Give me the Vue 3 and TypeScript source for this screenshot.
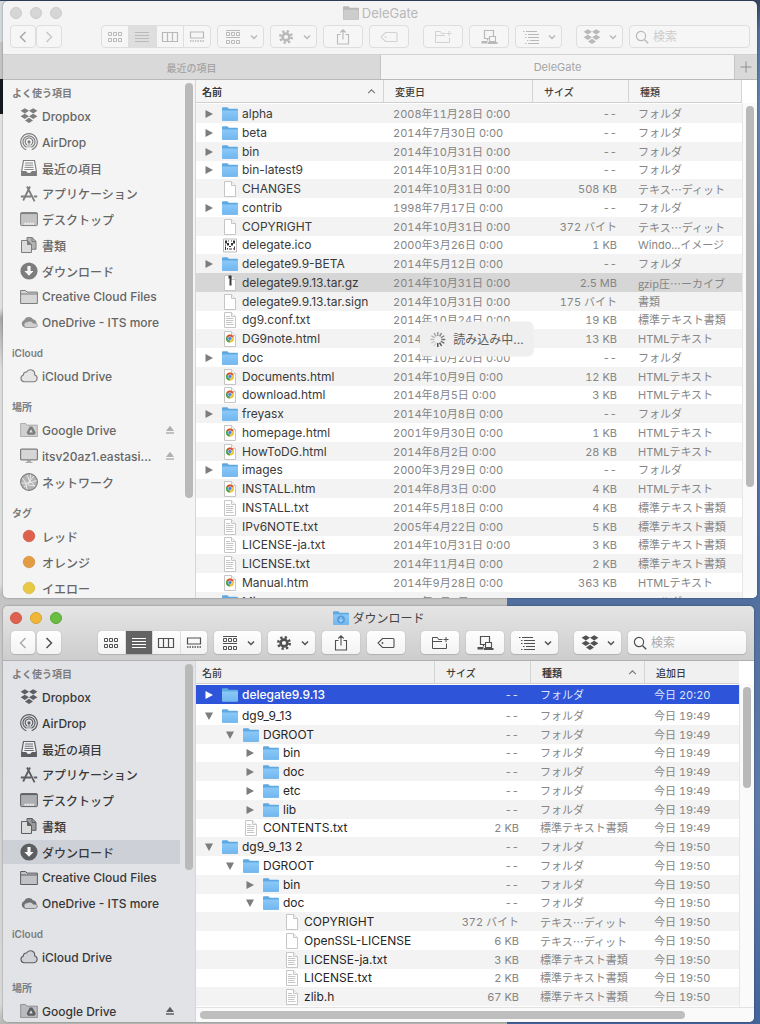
<script setup lang="ts">
type Column = { key: 'date' | 'size' | 'kind'; label: string; sorted?: boolean }
type Row = {
  name: string
  icon: string
  date: string
  size: string
  kind: string
  level?: number
  open?: boolean
  selected?: boolean
}
type Place = { label: string; icon: string; eject?: boolean; current?: boolean }
type Section = { title: string; items: Place[] }
type Finder = {
  id: string
  title: string
  titleIcon: string
  active: boolean
  tabs: string[]
  nameSorted: boolean
  columns: Column[]
  sections: Section[]
  rows: Row[]
  sideThumb: number
  listThumb: number
  wideThumb: number
  loading: boolean
}

const dir = (name: string, date: string, level = 0, open = false): Row => ({
  name, icon: 'folder', date, size: '--', kind: 'フォルダ', level, open,
})
const file = (name: string, icon: string, date: string, size: string, kind: string, level = 0): Row => ({
  name, icon, date, size, kind, level,
})
const day = (d: string) => `${d} 0:00`
const TEXT = '標準テキスト書類'
const EDIT = 'テキス…ディット'
const HTML = 'HTMLテキスト'

const sections = (current: string): Section[] => [
  {
    title: 'よく使う項目',
    items: [
      { label: 'Dropbox', icon: 'dropbox' },
      { label: 'AirDrop', icon: 'airdrop' },
      { label: '最近の項目', icon: 'recents' },
      { label: 'アプリケーション', icon: 'apps' },
      { label: 'デスクトップ', icon: 'desktop' },
      { label: '書類', icon: 'docs' },
      { label: 'ダウンロード', icon: 'download' },
      { label: 'Creative Cloud Files', icon: 'sidefolder' },
      { label: 'OneDrive - ITS more', icon: 'onedrive' },
    ].map((p) => ({ ...p, current: p.label === current })),
  },
  { title: 'iCloud', items: [{ label: 'iCloud Drive', icon: 'icloud' }] },
  {
    title: '場所',
    items: [
      { label: 'Google Drive', icon: 'gdrive', eject: true },
      { label: 'itsv20az1.eastasi...', icon: 'display', eject: true },
      { label: 'ネットワーク', icon: 'network' },
    ],
  },
  {
    title: 'タグ',
    items: [
      { label: 'レッド', icon: 'tag-red' },
      { label: 'オレンジ', icon: 'tag-orange' },
      { label: 'イエロー', icon: 'tag-yellow' },
    ],
  },
]

const windows: Finder[] = [
  {
    id: 'delegate',
    title: 'DeleGate',
    titleIcon: 'folder-gray',
    active: false,
    tabs: ['最近の項目', 'DeleGate'],
    nameSorted: true,
    columns: [
      { key: 'date', label: '変更日' },
      { key: 'size', label: 'サイズ' },
      { key: 'kind', label: '種類' },
    ],
    sections: sections(''),
    rows: [
      dir('alpha', day('2008年11月28日')),
      dir('beta', day('2014年7月30日')),
      dir('bin', day('2014年10月31日')),
      dir('bin-latest9', day('2014年10月31日')),
      file('CHANGES', 'blank', day('2014年10月31日'), '508 KB', EDIT),
      dir('contrib', day('1998年7月17日')),
      file('COPYRIGHT', 'blank', day('2014年10月31日'), '372 バイト', EDIT),
      file('delegate.ico', 'ico', day('2000年3月26日'), '1 KB', 'Windo...イメージ'),
      dir('delegate9.9-BETA', day('2014年5月12日')),
      { ...file('delegate9.9.13.tar.gz', 'archive', day('2014年10月31日'), '2.5 MB', 'gzip圧…ーカイブ'), selected: true },
      file('delegate9.9.13.tar.sign', 'blank', day('2014年10月31日'), '175 バイト', '書類'),
      file('dg9.conf.txt', 'text', day('2014年10月24日'), '19 KB', TEXT),
      file('DG9note.html', 'html', day('2014年10月24日'), '13 KB', HTML),
      dir('doc', day('2014年10月20日')),
      file('Documents.html', 'html', day('2014年10月9日'), '12 KB', HTML),
      file('download.html', 'html', day('2014年8月5日'), '3 KB', HTML),
      dir('freyasx', day('2014年10月8日')),
      file('homepage.html', 'html', day('2001年9月30日'), '1 KB', HTML),
      file('HowToDG.html', 'html', day('2014年8月2日'), '28 KB', HTML),
      dir('images', day('2000年3月29日')),
      file('INSTALL.htm', 'html', day('2014年8月3日'), '4 KB', HTML),
      file('INSTALL.txt', 'text', day('2014年5月18日'), '4 KB', TEXT),
      file('IPv6NOTE.txt', 'text', day('2005年4月22日'), '5 KB', TEXT),
      file('LICENSE-ja.txt', 'text', day('2014年10月31日'), '3 KB', TEXT),
      file('LICENSE.txt', 'text', day('2014年11月4日'), '2 KB', TEXT),
      file('Manual.htm', 'html', day('2014年9月28日'), '363 KB', HTML),
      dir('Misc', day('2014年9月8日')),
    ],
    sideThumb: 81,
    listThumb: 78,
    wideThumb: 0,
    loading: true,
  },
  {
    id: 'downloads',
    title: 'ダウンロード',
    titleIcon: 'folder-down',
    active: true,
    tabs: [],
    nameSorted: false,
    columns: [
      { key: 'size', label: 'サイズ' },
      { key: 'kind', label: '種類', sorted: true },
      { key: 'date', label: '追加日' },
    ],
    sections: sections('ダウンロード').slice(0, 3),
    rows: [
      { ...dir('delegate9.9.13', '今日 20:20'), selected: true },
      dir('dg9_9_13', '今日 19:49', 0, true),
      dir('DGROOT', '今日 19:49', 1, true),
      dir('bin', '今日 19:49', 2),
      dir('doc', '今日 19:49', 2),
      dir('etc', '今日 19:49', 2),
      dir('lib', '今日 19:49', 2),
      file('CONTENTS.txt', 'text', '今日 19:49', '2 KB', TEXT, 1),
      dir('dg9_9_13 2', '今日 19:50', 0, true),
      dir('DGROOT', '今日 19:50', 1, true),
      dir('bin', '今日 19:50', 2),
      dir('doc', '今日 19:50', 2, true),
      file('COPYRIGHT', 'blank', '今日 19:50', '372 バイト', EDIT, 3),
      file('OpenSSL-LICENSE', 'blank', '今日 19:50', '6 KB', EDIT, 3),
      file('LICENSE-ja.txt', 'text', '今日 19:50', '3 KB', TEXT, 3),
      file('LICENSE.txt', 'text', '今日 19:50', '2 KB', TEXT, 3),
      file('zlib.h', 'text', '今日 19:50', '67 KB', TEXT, 3),
    ],
    sideThumb: 58,
    listThumb: 32,
    wideThumb: 90,
    loading: false,
  },
]

const views = [
  { icon: 'view-icons', label: 'アイコン' },
  { icon: 'view-list', label: 'リスト' },
  { icon: 'view-columns', label: 'カラム' },
  { icon: 'view-gallery', label: 'ギャラリー' },
]
const tools = [
  { icon: 'group', label: 'グループ', menu: true },
  { icon: 'gear', label: 'アクション', menu: true },
  { icon: 'share', label: '共有', menu: false },
  { icon: 'label', label: 'タグを編集', menu: false },
  { icon: 'new-folder', label: '新規フォルダ', menu: false, apart: true },
  { icon: 'connect', label: '接続', menu: false },
  { icon: 'outline', label: '項目の並び', menu: true },
  { icon: 'dropbox', label: 'Dropbox メニュー', menu: true, apart: true },
]
const spokes = Array.from({ length: 12 }, (_, i) => i)
</script>

<template>
  <svg class="sprite" aria-hidden="true">
    <defs>
      <linearGradient id="blue" x1="0" y1="0" x2="0" y2="1">
        <stop offset="0" stop-color="#8ac8f7" /><stop offset="1" stop-color="#72b7f0" />
      </linearGradient>
      <symbol id="folder" viewBox="0 0 18 18">
        <path d="M1 15V3.200q0-1 1-1h4.400l1.500 1.600H16q1 0 1 1V15q0 .8-.8.8H1.800Q1 15.800 1 15z" fill="#5fa9e2" />
        <path d="M1 5.600h16V14.700q0 .8-.8.8H1.800q-.8 0-.8-.8z" fill="url(#blue)" />
      </symbol>
      <symbol id="folder-gray" viewBox="0 0 18 18">
        <path d="M1 15V3.200q0-1 1-1h4.400l1.500 1.600H16q1 0 1 1V15q0 .8-.8.8H1.800Q1 15.800 1 15z" fill="#b9b9b9" />
        <path d="M1.500 5.800h15V15h-15z" fill="#cdcdcd" />
      </symbol>
      <symbol id="folder-down" viewBox="0 0 18 18">
        <use href="#folder" />
        <circle cx="9" cy="10.500" r="4" fill="#5a9fdc" />
        <path d="M9 8.200v4M7.200 10.700 9 12.500l1.800-1.800" fill="none" stroke="#a6d6fb" stroke-width="1.200" />
      </symbol>
      <symbol id="blank" viewBox="0 0 18 18">
        <path d="M3.500 1.500h7l4 4v11h-11z" fill="#fff" stroke="#c6c6c6" />
        <path d="M10.500 1.500v4h4" fill="#f2f2f2" stroke="#c6c6c6" />
      </symbol>
      <symbol id="text" viewBox="0 0 18 18">
        <use href="#blank" />
        <path d="M5 5.500h4M5 7.500h7.500M5 9.500h7.500M5 11.500h6.500M5 13.500h7.500" stroke="#c0c0c0" stroke-width=".9" />
      </symbol>
      <symbol id="html" viewBox="0 0 18 18">
        <use href="#blank" />
        <circle cx="9" cy="8.500" r="4" fill="#f3c431" />
        <path d="M9 8.500 5.500 6.500A4 4 0 0 1 12.500 6.500z" fill="#d94b3c" />
        <path d="M9 8.500 5.500 6.500a4 4 0 0 0 3.300 6z" fill="#3d9f56" />
        <circle cx="9" cy="8.500" r="1.900" fill="#4880e0" stroke="#fff" stroke-width=".5" />
      </symbol>
      <symbol id="archive" viewBox="0 0 18 18">
        <use href="#blank" />
        <path d="M7.500 1.500h3v10h-2v-7h-1z" fill="#3b3b3b" />
      </symbol>
      <symbol id="ico" viewBox="0 0 18 18">
        <path d="M2.500 3h13v13h-13z" fill="#fff" stroke="#bbb" />
        <path d="M4 4.500h2v3H4zM7 4.500h1v1H7zM10 4.500h1v1h-1zM12 4.500h2v3h-2zM6 7h2v2.500H6zM10 7h2v2.500h-2zM8 10h2v1H8zM6 12h1v1.500H6zM8 12.500h3v1H8zM4 10.500h1V14H4zM13 10.500h1V14h-1z" fill="#333" />
        <path d="M4 8.500h1v1.500H4z" fill="#5470d0" /><path d="M12 12h1.500v1.500H12z" fill="#d66" />
      </symbol>

      <symbol id="dropbox" viewBox="0 0 18 18">
        <path d="M4.800 1.200 9 3.800 4.800 6.400.600 3.800zM13.200 1.200l4.200 2.600-4.200 2.600L9 3.800zM4.800 6.700 9 9.300l-4.200 2.600-4.200-2.600zM13.200 6.700l4.200 2.600-4.200 2.600L9 9.300zM9 10.800l4 2.600L9 16l-4-2.600z" fill="currentColor" />
      </symbol>
      <symbol id="airdrop" viewBox="0 0 18 18">
        <g fill="none" stroke="currentColor" stroke-width="1.200">
          <path d="M6.300 16.800a8.300 8.300 0 1 1 5.400 0M6.600 14.300a6 6 0 1 1 4.800 0M7 11.900a3.800 3.800 0 1 1 4 0" />
        </g>
        <path d="M9 8.500 11.600 14.500H6.400z" fill="currentColor" opacity=".4" />
        <circle cx="9" cy="8.800" r="1.600" fill="currentColor" />
      </symbol>
      <symbol id="recents" viewBox="0 0 18 18">
        <path d="M3.500 1.500h11l1.800 10.500v4.500H1.700V12z" fill="#fff" fill-opacity=".5" stroke="currentColor" stroke-width="1.200" />
        <path d="M5 4h8M4.800 6.200h8.400M4.500 8.400h9M4.300 10.500h9.400" stroke="currentColor" stroke-width=".9" />
        <path d="M1.700 12h4.500q.5 2 2.800 2t2.800-2h4.500v4.500H1.700z" fill="currentColor" />
      </symbol>
      <symbol id="apps" viewBox="0 0 18 18">
        <path d="M10 1.500 3.200 15.500M7 1.500l7.600 14.800" fill="none" stroke="currentColor" stroke-width="1.800" />
        <path d="M.800 10.400h10.400v2.200H.800zM13.400 10.400h3.800v2.200h-2.700z" fill="currentColor" />
      </symbol>
      <symbol id="desktop" viewBox="0 0 18 18">
        <rect x=".6" y="2.600" width="16.800" height="13" rx="1" fill="currentColor" fill-opacity=".4" stroke="currentColor" />
        <path d="M.600 3.600h16.800" stroke="currentColor" />
        <path d="M4.500 13.800h9.500" stroke="#eee" stroke-width="2" stroke-dasharray="2 .6" />
      </symbol>
      <symbol id="docs" viewBox="0 0 18 18">
        <path d="M7 1.500h5l4 3.800v8H7z" fill="currentColor" fill-opacity=".55" stroke="currentColor" />
        <path d="M12 1.500v4h4" fill="none" stroke="currentColor" />
        <path d="M1.500 4.500h6l4 4v8h-10z" fill="#dcdcdc" stroke="currentColor" />
        <path d="M7.500 4.500v4h4z" fill="currentColor" stroke="currentColor" />
      </symbol>
      <symbol id="download" viewBox="0 0 18 18">
        <circle cx="9" cy="9" r="8.600" fill="currentColor" />
        <path d="M7.400 4h3.200v5h3L9 13.800 4.400 9h3z" fill="#f6f6f6" />
      </symbol>
      <symbol id="sidefolder" viewBox="0 0 18 18">
        <path d="M.600 15.500v-13h5l1.400 1.600h10.400v11.400z" fill="currentColor" fill-opacity=".25" stroke="currentColor" />
        <path d="M.600 6h16.800" stroke="currentColor" />
      </symbol>
      <symbol id="onedrive" viewBox="0 0 18 18">
        <path d="M4.500 14.500a4 4 0 0 1-.3-7.500A5 5 0 0 1 13 6.300a4.200 4.200 0 0 1 .5 8.200z" fill="currentColor" fill-opacity=".85" />
        <path d="M5.500 14.500a3 3 0 0 1 0-5.300l4-1.200q3 0 3.800 2.200 3.600-.7 4.100 1.800 0 2.500-3 2.500z" fill="#d0d0d0" stroke="currentColor" stroke-width=".6" />
      </symbol>
      <symbol id="icloud" viewBox="0 0 18 18">
        <path d="M4 14.800a3.500 3.500 0 0 1-.6-6.800 2.800 2.800 0 0 1 3.200-3 4.300 4.300 0 0 1 8 2.800 3.600 3.600 0 0 1-.6 7z" fill="currentColor" fill-opacity=".12" stroke="currentColor" stroke-width="1.100" />
      </symbol>
      <symbol id="gdrive" viewBox="0 0 18 18">
        <path d="M.600 15.500v-13h5l1.400 1.600h10.400v11.400z" fill="currentColor" fill-opacity=".3" stroke="currentColor" stroke-opacity=".5" />
        <path d="M9.700 5.500h2.600l3.500 6-1.300 2.200H8l-1.300-2.200z" fill="currentColor" />
        <path d="M11 8.300 12.800 11.500H9.200z" fill="#ddd" />
      </symbol>
      <symbol id="display" viewBox="0 0 18 18">
        <rect x=".6" y="2.100" width="16.800" height="10.800" rx="1" fill="currentColor" fill-opacity=".25" stroke="currentColor" stroke-width="1.200" />
        <path d="M7 13.500h4v1.500h1.500v1h-7v-1H7z" fill="currentColor" fill-opacity=".6" />
      </symbol>
      <symbol id="network" viewBox="0 0 18 18">
        <circle cx="9" cy="9" r="8.400" fill="currentColor" fill-opacity=".55" stroke="currentColor" stroke-width="1.100" />
        <path d="M2 5q4 3 5 11.500M4 14q7-4 6.500-12.500M1.500 10q7 1.500 15-2.500M7 2q1 6 8 11M9 9l5-6M8 12l7 1" fill="none" stroke="#f0f0f0" stroke-width=".9" />
      </symbol>
      <symbol id="tag-red" viewBox="0 0 18 18"><circle cx="9" cy="9" r="5.800" fill="#dd614d" stroke="#c9503e" stroke-width=".6" /></symbol>
      <symbol id="tag-orange" viewBox="0 0 18 18"><circle cx="9" cy="9" r="5.800" fill="#e39c42" stroke="#cf8a35" stroke-width=".6" /></symbol>
      <symbol id="tag-yellow" viewBox="0 0 18 18"><circle cx="9" cy="9" r="5.800" fill="#e8c944" stroke="#d2b338" stroke-width=".6" /></symbol>
      <symbol id="eject" viewBox="0 0 10 10"><path d="M5 .8 9 6H1zM1 7.300h8v1.500H1z" fill="currentColor" /></symbol>

      <symbol id="view-icons" viewBox="0 0 18 18">
        <path d="M2.500 4.500h3v3h-3zM7.500 4.500h3v3h-3zM12.500 4.500h3v3h-3zM2.500 10.500h3v3h-3zM7.500 10.500h3v3h-3zM12.500 10.500h3v3h-3z" fill="none" stroke="currentColor" />
      </symbol>
      <symbol id="view-list" viewBox="0 0 18 18">
        <path d="M2 4.500h14M2 7.500h14M2 10.500h14M2 13.500h14" stroke="currentColor" stroke-width="1.200" />
      </symbol>
      <symbol id="view-columns" viewBox="0 0 18 18">
        <path d="M1.500 4.500h15v9h-15zM6.500 4.500v9M11.500 4.500v9" fill="none" stroke="currentColor" stroke-width="1.200" />
      </symbol>
      <symbol id="view-gallery" viewBox="0 0 18 18">
        <path d="M2.500 4h13v6h-13z" fill="none" stroke="currentColor" stroke-width="1.200" />
        <path d="M2 13h14" stroke="currentColor" stroke-width="1.700" stroke-dasharray="1.500 1" />
      </symbol>
      <symbol id="group" viewBox="0 0 18 18">
        <path d="M2 2.500h14M2 9.500h14" stroke="currentColor" />
        <path d="M2.500 4.500h3v3h-3zM7.500 4.500h3v3h-3zM12.500 4.500h3v3h-3zM2.500 12.500h3v3h-3zM7.500 12.500h3v3h-3zM12.500 12.500h3v3h-3z" fill="none" stroke="currentColor" />
      </symbol>
      <symbol id="gear" viewBox="0 0 18 18">
        <circle cx="9" cy="9" r="5.700" fill="none" stroke="currentColor" stroke-width="2.600" stroke-dasharray="2.250 2.230" />
        <circle cx="9" cy="9" r="3.400" fill="none" stroke="currentColor" stroke-width="2.600" />
      </symbol>
      <symbol id="share" viewBox="0 0 18 18">
        <path d="M6.500 6.500h-3v9.500h11V6.500h-3M9 11.500V1.800M6.300 4.500 9 1.800l2.700 2.700" fill="none" stroke="currentColor" stroke-width="1.100" />
      </symbol>
      <symbol id="label" viewBox="0 0 18 18">
        <path d="M5.500 4.500H16q1 0 1 1v7q0 1-1 1H5.500L1 9z" fill="none" stroke="currentColor" stroke-width="1.100" />
        <circle cx="5.500" cy="9" r=".9" fill="currentColor" />
      </symbol>
      <symbol id="new-folder" viewBox="0 0 18 18">
        <path d="M11.500 5.500H7.500L6.500 3.500H1.500v11h14V9.500M1.500 7.500H11M15 3v5M12.500 5.500h5" fill="none" stroke="currentColor" />
      </symbol>
      <symbol id="connect" viewBox="0 0 18 18">
        <path d="M10 10.500H4.500v-8h9v6M7.500 10.500v2" fill="none" stroke="currentColor" stroke-width="1.200" />
        <path d="M9.500 8.500h6v5h-6z" fill="none" stroke="currentColor" stroke-width="1.100" />
        <path d="M8 14h9.500v2H8zM1.500 13h6v2.500h-6z" fill="currentColor" />
      </symbol>
      <symbol id="outline" viewBox="0 0 18 18">
        <path d="M4 3.500h11M6 6.500h11M6 9.500h11M8 12.500h9M6 15.500h11" stroke="currentColor" />
        <path d="M1 3.500h1.500M3 6.500h1.500M3 9.500h1.500M5 12.500h1.500M3 15.500h1.500" stroke="currentColor" />
      </symbol>
      <symbol id="chevron" viewBox="0 0 8 8"><path d="m1 2.500 3 3 3-3" fill="none" stroke="currentColor" stroke-width="1.500" /></symbol>
      <symbol id="sort" viewBox="0 0 8 8"><path d="m1 5.500 3-3 3 3" fill="none" stroke="currentColor" /></symbol>
      <symbol id="back" viewBox="0 0 12 16"><path d="M8.500 3 3.500 8l5 5" fill="none" stroke="currentColor" stroke-width="1.500" /></symbol>
      <symbol id="forward" viewBox="0 0 12 16"><path d="m3.500 3 5 5-5 5" fill="none" stroke="currentColor" stroke-width="1.500" /></symbol>
      <symbol id="magnifier" viewBox="0 0 14 14">
        <circle cx="6" cy="6" r="4.600" fill="none" stroke="currentColor" stroke-width="1.200" />
        <path d="m9.400 9.400 3.800 3.800" stroke="currentColor" stroke-width="1.400" />
      </symbol>
      <symbol id="closed" viewBox="0 0 10 10"><path d="M1.500 1v8L9 5z" fill="currentColor" /></symbol>
      <symbol id="opened" viewBox="0 0 10 10"><path d="M1 1.500h8L5 9z" fill="currentColor" /></symbol>
    </defs>
  </svg>

  <main class="desk">
    <div class="behind" aria-hidden="true"></div>
    <section
      v-for="w in windows"
      :key="w.id"
      class="window"
      :class="[w.active ? 'active' : 'inactive', w.id]"
      :aria-label="w.title"
    >
      <header class="bar">
        <div class="titlerow">
          <div class="lights">
            <button class="light close" aria-label="閉じる"></button>
            <button class="light mini" aria-label="しまう"></button>
            <button class="light zoom" aria-label="拡大"></button>
          </div>
          <h1 class="title">
            <svg class="ic"><use :href="'#' + w.titleIcon" /></svg>{{ w.title }}
          </h1>
        </div>
        <div class="toolbar">
          <div class="nav">
            <button class="btn back" aria-label="戻る"><svg class="arrow"><use href="#back" /></svg></button>
            <button class="btn forward" aria-label="進む"><svg class="arrow"><use href="#forward" /></svg></button>
          </div>
          <div class="views">
            <button
              v-for="v in views"
              :key="v.icon"
              class="view"
              :class="{ on: v.icon === 'view-list' }"
              :aria-label="v.label"
            >
              <svg class="ic"><use :href="'#' + v.icon" /></svg>
            </button>
          </div>
          <button
            v-for="t in tools"
            :key="t.icon"
            class="btn tool"
            :class="{ menu: t.menu, apart: t.apart, faint: t.icon === 'label' || t.icon === 'new-folder' }"
            :aria-label="t.label"
          >
            <svg class="ic"><use :href="'#' + t.icon" /></svg>
            <svg v-if="t.menu" class="chev"><use href="#chevron" /></svg>
          </button>
          <label class="search">
            <svg class="glass"><use href="#magnifier" /></svg>
            <input type="search" placeholder="検索" aria-label="検索" />
          </label>
        </div>
      </header>

      <nav v-if="w.tabs.length" class="tabs">
        <button v-for="t in w.tabs" :key="t" class="tab" :class="{ front: t === w.title }">{{ t }}</button>
        <button class="addtab" aria-label="新規タブ">
          <svg class="plus" viewBox="0 0 12 12"><path d="M6 .5v11M.5 6h11" stroke="currentColor" /></svg>
        </button>
      </nav>

      <div class="content">
        <aside class="sidebar">
          <div class="places">
            <div v-for="s in w.sections" :key="s.title" class="section">
              <h2>{{ s.title }}</h2>
              <ul>
                <li v-for="p in s.items" :key="p.label">
                  <a href="#" class="place" :class="{ current: p.current }">
                    <svg class="ic"><use :href="'#' + p.icon" /></svg>
                    <span>{{ p.label }}</span>
                    <svg v-if="p.eject" class="eject"><use href="#eject" /></svg>
                  </a>
                </li>
              </ul>
            </div>
          </div>
          <div class="track"><div class="thumb" :style="{ height: w.sideThumb + '%' }"></div></div>
        </aside>

        <div class="pane">
          <div class="listing">
            <table>
              <colgroup>
                <col />
                <col v-for="c in w.columns" :key="c.key" :class="'col-' + c.key" />
              </colgroup>
              <thead>
                <tr>
                  <th :class="{ sorted: w.nameSorted }">
                    <button>名前<svg v-if="w.nameSorted" class="sort"><use href="#sort" /></svg></button>
                  </th>
                  <th v-for="c in w.columns" :key="c.key" :class="{ sorted: c.sorted }">
                    <button>{{ c.label }}<svg v-if="c.sorted" class="sort"><use href="#sort" /></svg></button>
                  </th>
                </tr>
              </thead>
              <tbody>
                <tr v-for="(r, i) in w.rows" :key="i" :class="{ selected: r.selected }">
                  <td>
                    <div class="name" :class="'level' + (r.level ?? 0)">
                      <span class="twist">
                        <button v-if="r.icon === 'folder'" :aria-label="r.name + 'を開閉'" :aria-expanded="r.open">
                          <svg><use :href="r.open ? '#opened' : '#closed'" /></svg>
                        </button>
                      </span>
                      <svg class="ic"><use :href="'#' + r.icon" /></svg>
                      <span>{{ r.name }}</span>
                    </div>
                  </td>
                  <td
                    v-for="c in w.columns"
                    :key="c.key"
                    :class="[c.key, { wide: c.key === 'kind' && r.kind.includes('…') }]"
                  >{{ r[c.key] }}</td>
                </tr>
              </tbody>
            </table>
            <div class="gutter">
              <div class="corner"></div>
              <div class="track"><div class="thumb" :style="{ height: w.listThumb + '%' }"></div></div>
            </div>
          </div>
          <div v-if="w.wideThumb" class="hscroll">
            <div class="hthumb" :style="{ width: w.wideThumb + '%' }"></div>
          </div>
          <div v-if="w.loading" class="loading" role="status">
            <svg viewBox="0 0 18 18">
              <path
                v-for="s in spokes"
                :key="s"
                d="M9 1.500v4"
                stroke="#444"
                stroke-width="1.400"
                :opacity="0.15 + 0.85 * (((17 - s) % 12) / 11)"
                :transform="`rotate(${360 - s * 30} 9 9)`"
              />
            </svg>
            読み込み中...
          </div>
        </div>
      </div>
    </section>
  </main>
</template>

<style>
body {
  margin: 0;
}
</style>

<style scoped>
* {
  box-sizing: border-box;
}
.sprite {
  position: absolute;
  width: 0;
  height: 0;
}
button {
  margin: 0;
  padding: 0;
  border: 0;
  background: none;
  font: inherit;
  color: inherit;
}
h1,
h2,
ul {
  margin: 0;
  padding: 0;
  list-style: none;
}
.desk {
  position: relative;
  display: flex;
  flex-direction: column;
  gap: 8px;
  height: 100vh;
  min-width: 720px;
  padding: 1px 0 2px 3px;
  overflow: hidden;
  background: linear-gradient(#33435f, #4f6f9f 3%, #6284b4 10%, #4a70a8 55%, #54709c 60%, #5f7ba8 80%, #43639a);
  font-family: Inter, "Noto Sans CJK JP", sans-serif;
  font-size: 12px;
}
.behind {
  position: absolute;
  left: 0;
  top: 1px;
  bottom: 0;
  width: 507px;
  background: linear-gradient(#d3d8db 0 4%, #c4c4c4 4% 7.600%, #15181d 7.600% 11%, #e2e2e2 11% 30%, #a8a8a8 31%, #dedede 36% 57%, #c3c3c3 58%, #c9c9c9 62%, #dadada 98%, #b5b8b4);
}
.ic {
  flex: none;
  width: 18px;
  height: 18px;
}
.window {
  position: relative;
  display: flex;
  flex-direction: column;
  min-height: 0;
  overflow: hidden;
  border-radius: 5px;
  box-shadow: 0 0 2px rgba(0, 0, 0, 0.45);
}
.delegate {
  flex: 597 1 0;
  margin-right: 3px;
}
.downloads {
  flex: 416 1 0;
  margin-right: 6px;
}
.inactive {
  --gap: 6px;
  --w-menu: 47px;
  --w-tool: 40px;
  --apart: 8px;
  --ink: #b9b9b9;
  --side-bg: #f4f4f4;
  --side-ink: #666;
  --side-icon: #7d7d7d;
  --eject: #b0b0b0;
  --name: #3a3a3a;
  background: #f4f4f4;
}
.active {
  --gap: 7px;
  --w-menu: 47px;
  --w-tool: 38px;
  --apart: 9px;
  --ink: #505050;
  --side-bg: #e2e3e7;
  --side-ink: #383838;
  --side-icon: #5c5e61;
  --eject: #606060;
  --name: #262626;
  background: #fff;
}
.bar {
  flex: none;
  height: 53px;
  color: var(--ink);
}
.active .bar {
  height: 55px;
  border-bottom: 1px solid #b0b0b0;
  background: linear-gradient(#e5e5e5, #cdcdcd);
}
.titlerow {
  display: grid;
  grid-template-columns: 1fr auto 1fr;
  align-items: center;
  height: 23px;
  padding: 0 7px;
}
.lights {
  display: flex;
  gap: 8px;
}
.light {
  width: 12px;
  height: 12px;
  border: 1px solid #cbcbcb;
  border-radius: 50%;
  background: #d6d6d6;
}
.active .close {
  border-color: #cf5848;
  background: #df6251;
}
.active .mini {
  border-color: #d9a22b;
  background: #efb63a;
}
.active .zoom {
  border-color: #5aa635;
  background: #6bbf40;
}
.title {
  display: flex;
  align-items: center;
  gap: 2px;
  font-size: 13px;
  font-weight: 400;
}
.active .title {
  color: #444;
  font-size: 12px;
}
.toolbar {
  display: flex;
  gap: var(--gap);
  height: 23px;
  margin-top: 1px;
  padding: 0 7px;
}
.active .toolbar {
  margin-top: 2px;
  padding: 0 8px;
}
.nav {
  display: flex;
}
.active .nav {
  gap: 2px;
}
.btn,
.views,
.search {
  display: flex;
  align-items: center;
  justify-content: center;
  border-radius: 4px;
  background: #fafafa;
}
.inactive .btn,
.inactive .views,
.inactive .search {
  border: 1px solid #dedede;
  background: #f6f6f6;
}
.active .btn,
.active .views,
.active .search {
  background: linear-gradient(#fefefe, #f3f3f3);
  box-shadow: 0 0 1px rgba(0, 0, 0, 0.3), 0 1px 1px rgba(0, 0, 0, 0.12);
}
.back,
.forward {
  width: 26px;
}
.active .back,
.active .forward {
  width: 24px;
}
.arrow {
  width: 12px;
  height: 16px;
}
.active .back {
  color: #ababab;
}
.inactive .back {
  color: #a8a8a8;
}
.inactive .forward {
  color: #c8c8c8;
}
.views {
  width: 110px;
  margin-left: 33px;
  overflow: hidden;
}
.active .views {
  width: 109px;
  margin-left: 30px;
}
.view {
  display: flex;
  flex: 1;
  align-items: center;
  justify-content: center;
  height: 100%;
}
.view + .view {
  border-left: 1px solid #dedede;
}
.inactive .on {
  background: #dedede;
}
.active .on {
  background: #636363;
  color: #fff;
}
.tool {
  flex: none;
  width: var(--w-tool);
}
.menu {
  gap: 8px;
  width: var(--w-menu);
}
.apart {
  margin-left: var(--apart);
}
.inactive .faint {
  color: #d2d2d2;
}
.chev {
  width: 8px;
  height: 8px;
}
.search {
  flex: 1;
  justify-content: flex-start;
  gap: 4px;
  min-width: 60px;
  padding: 0 5px;
}
.glass {
  flex: none;
  width: 14px;
  height: 14px;
}
.search input {
  flex: 1;
  width: 0;
  min-width: 0;
  padding: 0;
  border: 0;
  outline: 0;
  background: none;
  font: inherit;
  color: #333;
}
.search input::placeholder {
  color: #adadad;
  opacity: 1;
}
.inactive .search input::placeholder {
  color: #cdcdcd;
}
.tabs {
  display: flex;
  flex: none;
  height: 26px;
  border-top: 1px solid #d2d2d2;
  border-bottom: 1px solid #b9b9b9;
  background: #d9d9d9;
  color: #a5a5a5;
  font-size: 10px;
  font-weight: 500;
}
.tab {
  flex: 0 1 50%;
}
.front {
  flex-basis: calc(50% - 22px);
  border-left: 1px solid #c4c4c4;
  border-right: 1px solid #c4c4c4;
  background: #f4f4f4;
  font-size: 11px;
  font-weight: 400;
}
.addtab {
  display: flex;
  flex: 1;
  align-items: center;
  justify-content: center;
  color: #909090;
}
.plus {
  width: 12px;
  height: 12px;
}
.content {
  display: flex;
  flex: 1;
  min-height: 0;
}
.sidebar {
  display: flex;
  flex: none;
  width: 193px;
  border-right: 1px solid #d6d6d6;
  background: var(--side-bg);
}
.places {
  flex: 1;
  padding-top: 3px;
  overflow: hidden;
}
.section + .section {
  margin-top: 8px;
}
h2 {
  height: 20px;
  padding-left: 9px;
  color: #7c7c7c;
  font-size: 10px;
  font-weight: 600;
  line-height: 20px;
}
li {
  display: flex;
  align-items: center;
  height: 26px;
}
li:nth-child(4n) {
  height: 25px;
}
.place {
  display: flex;
  flex: 1;
  align-items: center;
  gap: 4px;
  width: 178px;
  height: 24px;
  padding: 0 7px 0 17px;
  color: var(--side-ink);
  font-weight: 500;
  text-decoration: none;
  white-space: nowrap;
}
.place .ic {
  color: var(--side-icon);
}
.current {
  margin-right: 2px;
  background: #cdd0d6;
}
.eject {
  width: 10px;
  height: 10px;
  margin-left: auto;
  color: var(--eject);
}
.track {
  flex: none;
  width: 13px;
  padding: 3px 2px 3px 3px;
}
.thumb {
  width: 8px;
  border-radius: 4px;
  background: #b9b9b9;
}
.pane {
  position: relative;
  display: flex;
  flex: 1;
  flex-direction: column;
  min-width: 0;
}
.listing {
  display: flex;
  flex: 1;
  align-items: flex-start;
  min-height: 0;
  overflow: hidden;
  background: #fff;
}
table {
  flex: 1;
  width: 0;
  table-layout: fixed;
  border-collapse: separate;
  border-spacing: 0;
}
.inactive .col-date {
  width: 149px;
}
.col-size {
  width: 96px;
}
.inactive .col-kind {
  width: 113px;
}
.active .col-kind {
  width: 114px;
}
.active .col-date {
  width: 94px;
}
th {
  height: 23px;
  padding: 0;
  border-right: 1px solid #d4d4d4;
  border-bottom: 1px solid #d0d0d0;
  background: #f5f5f5;
  color: #3c3c3c;
  font-size: 10px;
  font-weight: 500;
}
.active th {
  background: #f0f0f0;
}
.active th:last-child {
  border-right: 0;
}
th.sorted {
  font-weight: 700;
}
th button {
  display: flex;
  align-items: center;
  justify-content: space-between;
  width: 100%;
  padding: 0 7px 0 11px;
}
th:first-child button {
  padding-left: 6px;
}
.sort {
  width: 9px;
  height: 9px;
  color: #777;
}
tbody::before {
  display: block;
  height: 1px;
  content: "";
}
td {
  height: 19px;
  padding: 0 0 0 9px;
  overflow: hidden;
  color: #858585;
  font-size: 11px;
  font-variant-numeric: tabular-nums;
  line-height: 18px;
  white-space: nowrap;
}
tr:nth-child(4n) td {
  height: 18px;
}
tr:nth-child(odd) td {
  background: #f3f3f3;
}
td:first-child {
  padding: 0;
}
td.size {
  padding: 0 12px 0 0;
  text-align: right;
}
td.wide {
  font-family: "Noto Sans CJK JP", sans-serif;
}
.name {
  display: flex;
  align-items: center;
  height: 18px;
  padding-left: 5px;
  color: var(--name);
  font-size: 12px;
  font-variant-numeric: normal;
}
.level1 {
  padding-left: 26px;
}
.level2 {
  padding-left: 46px;
}
.level3 {
  padding-left: 67px;
}
.twist {
  display: flex;
  align-items: center;
  justify-content: center;
  width: 16px;
  margin-right: 4px;
}
.twist button {
  display: flex;
}
.twist svg {
  width: 10px;
  height: 10px;
  color: #7d7d7d;
}
.name .ic {
  margin-right: 3px;
}
.inactive tr.selected td {
  background: #d6d6d6;
}
.active tr.selected td {
  height: 21px;
  border-bottom: 2px solid #fff;
  background: #2d54d9;
  color: #dfe6fb;
}
.active .selected .name {
  color: #fff;
  font-weight: 500;
}
.active .selected .twist svg {
  color: #fff;
}
.gutter {
  display: flex;
  flex: none;
  flex-direction: column;
  align-self: stretch;
  width: 15px;
  background: #fafafa;
}
.gutter .track {
  flex: 1;
  width: 15px;
  padding-left: 3px;
  border-left: 1px solid #e6e6e6;
}
.corner {
  flex: none;
  height: 23px;
  background: #fff;
}
.hscroll {
  flex: none;
  height: 15px;
  padding: 3px 15px 3px 4px;
  border-top: 1px solid #e2e2e2;
  background: #fafafa;
}
.hthumb {
  height: 8px;
  border-radius: 4px;
  background: #bebebe;
}
.loading {
  position: absolute;
  top: 50%;
  left: 50%;
  display: flex;
  align-items: center;
  gap: 7px;
  height: 35px;
  padding: 0 10px 0 9px;
  border-radius: 6px;
  background: #efefef;
  color: #5c5c5c;
  line-height: 18px;
  white-space: nowrap;
  transform: translate(-50%, -50%);
}
.loading svg {
  width: 18px;
  height: 18px;
}
</style>
